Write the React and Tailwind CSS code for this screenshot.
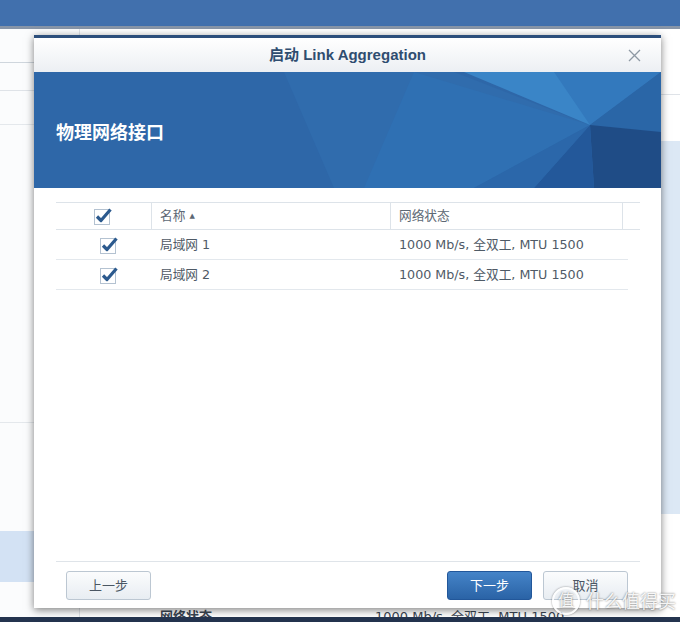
import React from "react";

const cjk = { fontFamily: '"DejaVu Sans", "Noto Sans CJK SC", sans-serif' };

// checkbox with the heavy check that pokes out of its box
const Check = () => (
  <svg width="20" height="20" viewBox="0 0 20 20">
    <rect x="1.5" y="3.5" width="15" height="15" fill="#fff" stroke="#b4c2d1" />
    <path d="M4 10.5 L8 14.5 L17.5 3.5" fill="none" stroke="#2c5a8e" strokeWidth="3.2" strokeLinejoin="round" />
  </svg>
);

const rows = [
  { name: "局域网 1", status: "1000 Mb/s, 全双工, MTU 1500" },
  { name: "局域网 2", status: "1000 Mb/s, 全双工, MTU 1500" },
];

const Banner = () => (
  <div className="relative h-[116px] bg-[#2e67a8] overflow-hidden">
    <svg className="absolute inset-0" width="627" height="116" viewBox="0 0 627 116">
      <polygon points="250,0 420,0 556,53 330,116 300,116" fill="#306cad" />
      <polygon points="380,0 556,53 440,116 330,116" fill="#2f70b3" />
      <polygon points="430,0 560,0 556,53" fill="#3a85c7" />
      <polygon points="520,0 627,0 556,53" fill="#3379bd" />
      <polygon points="627,0 627,60 556,53" fill="#2a66a7" />
      <polygon points="556,53 627,60 627,116 560,116" fill="#1f4c86" />
      <polygon points="556,53 560,116 500,116" fill="#23589a" />
      <polygon points="556,53 500,116 440,116" fill="#2b67aa" />
    </svg>
    <div className="relative pl-[22px] pt-[47px] text-[18px] font-bold text-white" style={cjk}>
      物理网络接口
    </div>
  </div>
);

const Btn = ({ children, primary }) => (
  <button
    className={
      primary
        ? "h-[29px] w-[85px] rounded-[3px] border border-[#22579a] bg-gradient-to-b from-[#4584c8] to-[#2a63a6] text-[13px] text-white"
        : "h-[29px] w-[85px] rounded-[3px] border border-[#bcc7d2] bg-gradient-to-b from-[#fbfcfd] to-[#e8edf2] text-[13px] text-[#4a5663]"
    }
    style={cjk}
  >
    {children}
  </button>
);

const Dialog = () => (
  <div className="absolute left-[34px] top-[35px] w-[627px] h-[573px] flex flex-col bg-white border-t-[3px] border-[#2d4f7c] shadow-[0_2px_8px_rgba(0,0,0,0.5)]">
    {/* title bar */}
    <div className="relative h-[34px] flex items-center justify-center bg-gradient-to-b from-white to-[#eceff3]">
      <span className="text-[15px] font-bold text-[#2f4d70]" style={{ fontFamily: '"Liberation Sans", "Noto Sans CJK SC", sans-serif' }}>
        启动 Link Aggregation
      </span>
      <svg className="absolute right-[20px] top-[11px]" width="13" height="13" viewBox="0 0 13 13">
        <path d="M1 1 L12 12 M12 1 L1 12" stroke="#8e99a4" strokeWidth="1.3" />
      </svg>
    </div>
    <Banner />

    {/* grid */}
    <div className="flex-1 pt-[14px] pl-[22px] pr-[21px]">
      <div className="flex h-[28px] items-center border-y border-[#dde3e9] text-[12.7px] text-[#5d6874]" style={cjk}>
        <div className="w-[95px] h-full flex items-center justify-center pr-[2px]">
          <Check />
        </div>
        <div className="w-[239px] h-full flex items-center border-l border-[#dde3e9] pl-[8px]">
          名称 <span className="ml-[4px] text-[7px]">▲</span>
        </div>
        <div className="w-[233px] h-full flex items-center border-x border-[#dde3e9] pl-[8px]">网络状态</div>
      </div>
      {rows.map((r) => (
        <div key={r.name} className="flex w-[572px] h-[30px] items-center border-b border-[#e3e8ed] text-[12.7px] text-[#4f5a66]" style={cjk}>
          <div className="w-[95px] flex justify-center pl-[11px]">
            <Check />
          </div>
          <div className="w-[239px] pl-[9px]">{r.name}</div>
          <div className="pl-[9px]">{r.status}</div>
        </div>
      ))}
    </div>

    {/* footer */}
    <div className="mx-[21px] ml-[22px] border-t border-[#dfe4e9] pt-[9px] pb-[8px] pl-[10px] pr-[12px] flex items-center">
      <Btn>上一步</Btn>
      <div className="flex-1" />
      <Btn primary>下一步</Btn>
      <div className="w-[11px]" />
      <Btn>取消</Btn>
    </div>
  </div>
);

export default function App() {
  return (
    <div className="relative w-[680px] h-[622px] overflow-hidden bg-white flex flex-col" style={cjk}>
      <div className="h-[26px] bg-[#4170ad]" />
      <div className="h-[3px] bg-[#8795a8]" />
      <div className="flex-1 flex">
        {/* left panel behind the dialog */}
        <div className="w-[80px] flex flex-col border-r border-[#dfe3e8] bg-[#fbfcfd]">
          <div className="h-[34px] border-b border-[#cfd6dd]" />
          <div className="h-[28px] border-b border-[#dfe3e8]" />
          <div className="h-[34px] border-b border-[#e4e8ec]" />
          <div className="h-[298px] border-b border-[#e4e8ec]" />
          <div className="h-[108px]" />
          <div className="h-[51px] bg-[#d3e2f4]" />
          <div className="flex-1" />
        </div>
        <div className="flex-1 flex flex-col justify-end">
          <div className="flex h-[12px] overflow-hidden text-[13px] text-[#3c4653] leading-[24px]">
            <span className="pl-[80px] w-[295px] font-bold">网络状态</span>
            <span>1000 Mb/s, 全双工, MTU 1500</span>
          </div>
        </div>
        <div className="w-[20px] flex flex-col">
          <div className="h-[66px] border-b border-[#dfe3e8]" />
          <div className="h-[46px]" />
          <div className="h-[373px] bg-[#dce8f5]" />
          <div className="flex-1" />
        </div>
      </div>
      <div className="h-[5px] bg-[#24344f]" />

      <Dialog />

      {/* watermark */}
      <div className="absolute right-[4px] bottom-[7px] flex items-center gap-[6px] text-white/90 [text-shadow:0_0_2px_rgba(0,0,0,0.6)]">
        <span className="w-[28px] h-[28px] rounded-full border-2 border-white/90 flex items-center justify-center text-[16px] shadow-[0_0_2px_rgba(0,0,0,0.5)]">值</span>
        <span className="text-[18px]">什么值得买</span>
      </div>
    </div>
  );
}
